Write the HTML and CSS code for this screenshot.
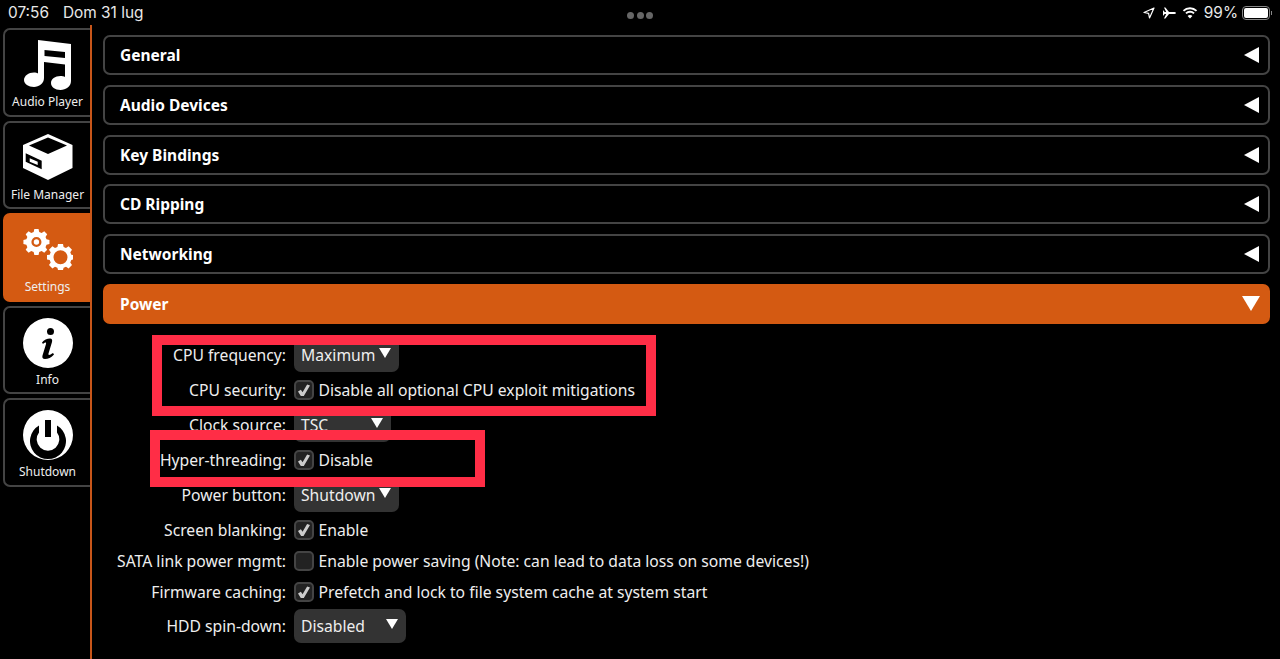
FILE: index.html
```html
<!DOCTYPE html>
<html lang="it">
<head>
<meta charset="utf-8">
<title>Settings</title>
<link rel="stylesheet" href="styles.css">
</head>
<body>
<header class="status">
  <div class="status-left"><span>07:56</span><span>Dom 31 lug</span></div>
  <div class="status-dots"><i></i><i></i><i></i></div>
  <div class="status-right">
    <svg class="st-loc" viewBox="0 0 12 12"><path d="M11 1 1 5.500l4.600.9.9 4.600z" fill="none" stroke="#fff" stroke-width="1.200" stroke-linejoin="round"/></svg>
    <svg class="st-plane" viewBox="0 0 14 14"><path d="M1 1.500h1.400L6 6h4.600c1.200 0 2.400.4 2.400 1s-1.200 1-2.400 1H6l-3.600 4.500H1L3.200 8H1.600L.6 9.500H0V4.500h.6L1.600 6h1.600z" fill="#fff"/></svg>
    <svg class="st-wifi" viewBox="0 0 16 12"><path d="M8 2.200c2.300 0 4.400.9 5.900 2.400l1.300-1.400A10.300 10.300 0 0 0 8 .2 10.300 10.300 0 0 0 .8 3.200l1.300 1.400A8.400 8.400 0 0 1 8 2.200zm0 3.500c1.300 0 2.500.5 3.400 1.400l1.300-1.400A6.700 6.700 0 0 0 8 3.800a6.700 6.700 0 0 0-4.700 1.900l1.300 1.400A4.900 4.900 0 0 1 8 5.700zM8 11.500l2.400-2.500A3.400 3.400 0 0 0 8 8a3.400 3.400 0 0 0-2.400 1z" fill="#fff"/></svg>
    <span class="st-pct">99%</span>
    <span class="battery"><b></b></span><span class="battery-tip"></span>
  </div>
</header>
<div class="app">
  <nav class="side">
    <a class="tab">
      <svg class="icon-music" viewBox="0 0 47 50"><path fill-rule="evenodd" d="M14 0 47 4V41C47 46.500 42 50 36.500 50 31 50 27 47 27 43 27 39 31 36 36.500 36 38 36 40 36.300 41 37V24.500L20 22V38C20 43.500 15 47 10 47 4.500 47 0 44 0 40 0 36 4.500 32.500 10 32.500 11.500 32.500 13 32.800 14 33.500ZM20.500 10V16L41 18V12Z"/></svg>
      <span>Audio Player</span>
    </a>
    <a class="tab tab-box">
      <svg class="tab-icon" viewBox="0 0 50 46"><path fill-rule="evenodd" d="M25 0 49.500 11V34L25 46 0 34V11ZM25 3.500 6 11.500 25 20 44 11.500ZM2.700 19.300V27.700L18.700 35.300V26.700ZM6.700 24.300 14.700 27.700V31L6.700 27.700Z"/></svg>
      <span>File Manager</span>
    </a>
    <a class="tab tab-on">
      <svg class="tab-icon" viewBox="0 0 50 41"><g fill="#fff" fill-rule="evenodd"><g transform="scale(.84)"><path d="M13.500 0H18.500L19.300 3.600 22.200 4.800 25.300 2.800 28.800 6.300 26.800 9.400 28 12.300 31.500 13V18L28 18.800 26.800 21.700 28.800 24.800 25.300 28.300 22.200 26.300 19.300 27.500 18.500 31H13.500L12.700 27.500 9.800 26.300 6.700 28.300 3.200 24.800 5.200 21.700 4 18.800 .5 18V13L4 12.300 5.200 9.400 3.200 6.300 6.700 2.800 9.800 4.800 12.700 3.600ZM16 9.500A6 6 0 1 0 16 21.500 6 6 0 1 0 16 9.500Z"/><circle cx="16" cy="15.500" r="3.200"/></g><path d="M35 15H40L40.600 18 43 19 45.600 17.300 49 20.700 47.300 23.300 48.300 25.700 50 26V30.500L48.300 31 47.300 33.400 49 36 45.600 39.400 43 37.700 40.600 38.700 40 41H35L34.400 38.700 32 37.700 29.400 39.400 26 36 27.700 33.400 26.700 31 24 30.500V26L26.700 25.700 27.700 23.300 26 20.700 29.400 17.300 32 19 34.400 18ZM37.500 21.300A7 7 0 1 0 37.500 35.300 7 7 0 1 0 37.500 21.300Z"/></g></svg>
      <span>Settings</span>
    </a>
    <a class="tab">
      <svg class="tab-icon" viewBox="0 0 50 50"><path fill-rule="evenodd" d="M25 0A25 25 0 1 0 25 50 25 25 0 1 0 25 0ZM27.500 10A3.500 3.500 0 1 1 27.500 17 3.500 3.500 0 1 1 27.500 10ZM19 24.500C21 22 24 20.500 27 20.500 29 20.500 29.500 22 29 24L25.500 35.500C25 37.500 26.500 37.500 30 35L31 36.500C28.500 39.500 25 41 22 41 19.500 41 19 39.500 19.500 37.500L23 26C23.500 24 22 24 20 26Z"/></svg>
      <span>Info</span>
    </a>
    <a class="tab">
      <svg class="tab-icon" viewBox="0 0 50 50"><path fill-rule="evenodd" d="M25 0A25 25 0 1 0 25 50 25 25 0 1 0 25 0ZM22 10H28V27H22ZM16 15.500V22.500A11.300 11.300 0 1 0 34 22.500V15.500A18 18 0 1 1 16 15.500Z"/></svg>
      <span>Shutdown</span>
    </a>
  </nav>
  <main class="main">
    <div class="panel"><span>General</span><i class="tri-left"></i></div>
    <div class="panel"><span>Audio Devices</span><i class="tri-left"></i></div>
    <div class="panel"><span>Key Bindings</span><i class="tri-left"></i></div>
    <div class="panel"><span>CD Ripping</span><i class="tri-left"></i></div>
    <div class="panel"><span>Networking</span><i class="tri-left"></i></div>
    <div class="panel panel-on"><span>Power</span><i class="tri-down"></i></div>
    <div class="form">
      <div class="row"><label>CPU frequency:</label><div class="select sel-md"><span>Maximum</span><i></i></div></div>
      <div class="row"><label>CPU security:</label><div class="check on"></div><span>Disable all optional CPU exploit mitigations</span></div>
      <div class="row"><label>Clock source:</label><div class="select sel-sm"><span>TSC</span><i></i></div></div>
      <div class="row"><label>Hyper-threading:</label><div class="check on"></div><span>Disable</span></div>
      <div class="row"><label>Power button:</label><div class="select sel-md"><span>Shutdown</span><i></i></div></div>
      <div class="row row-mid"><label>Screen blanking:</label><div class="check on"></div><span>Enable</span></div>
      <div class="row row-tight"><label>SATA link power mgmt:</label><div class="check"></div><span>Enable power saving (Note: can lead to data loss on some devices!)</span></div>
      <div class="row row-tight"><label>Firmware caching:</label><div class="check on"></div><span>Prefetch and lock to file system cache at system start</span></div>
      <div class="row row-tall"><label>HDD spin-down:</label><div class="select sel-lg"><span>Disabled</span><i></i></div></div>
    </div>
  </main>
</div>
<div class="mark mark-a"></div>
<div class="mark mark-b"></div>
</body>
</html>
```
FILE: styles.css
```css
* { box-sizing: border-box; }
html, body { margin: 0; height: 100%; }
body {
  background: #000;
  color: #fff;
  font-family: "Noto Sans", "Open Sans", sans-serif;
  font-size: 15.7px;
  overflow: hidden;
  position: relative;
}
.status {
  height: 25px;
  display: flex;
  align-items: center;
  justify-content: space-between;
  padding: 0 8px 0 8px;
  position: relative;
  font-family: Inter, "Liberation Sans", sans-serif;
  font-size: 15.4px;
  color: #e8e8e8;
}
.status-left { display: flex; gap: 14px; }
.status-dots { position: absolute; left: 627px; top: 12px; display: flex; gap: 2.5px; }
.status-dots i { width: 7px; height: 7px; border-radius: 50%; background: #666; }
.status-right { display: flex; align-items: center; }
.st-loc { width: 12px; height: 12px; margin-right: 8px; }
.st-plane { width: 14px; height: 14px; margin-right: 5px; }
.st-wifi { width: 16px; height: 12px; margin-right: 6px; }
.st-pct { margin-right: 4px; }
.battery { width: 28px; height: 14px; border: 1px solid #888; border-radius: 4px; padding: 1px; display: block; }
.battery b { display: block; height: 100%; background: #fff; border-radius: 2px; }
.battery-tip { width: 1px; height: 4px; background: #888; margin-left: 1px; }
.app { display: flex; height: 634px; }
.side {
  width: 92px;
  flex: none;
  border-right: 2px solid #c8561a;
  padding: 3px 0 0 3px;
  display: flex;
  flex-direction: column;
  gap: 4px;
}
.tab {
  height: 89px;
  flex: none;
  border: 2px solid #444;
  border-right: 0;
  border-radius: 7px 0 0 7px;
  display: flex;
  flex-direction: column;
  align-items: center;
  font-size: 12px;
  color: #eee;
  padding-top: 10px;
  position: relative;
}
.tab:nth-child(even) { height: 88px; }
.tab span { position: absolute; bottom: 5px; left: 0; right: 0; text-align: center; }
.tab:nth-child(even) span { bottom: 4px; }
.tab-box { padding-top: 11px; }
.tab-on { background: #d45a12; border-color: #d45a12; padding-top: 14px; }
.tab-icon { width: 50px; fill: #fff; display: block; }
.icon-music { width: 47px; fill: #fff; display: block; }
.main { flex: 1; padding: 10px 10px 0 11px; display: flex; flex-direction: column; min-width: 0; }
.panel {
  height: 40px;
  flex: none;
  border: 2px solid #444;
  border-radius: 7px;
  margin-bottom: 9.8px;
  display: flex;
  align-items: center;
  justify-content: space-between;
  padding: 0 9px 0 15px;
  font-weight: 700;
  font-size: 15.5px;
}
.panel-on { background: #d45a12; border-color: #d45a12; margin-bottom: 14px; }
.tri-left { width: 0; height: 0; border-style: solid; border-width: 8px 15px 8px 0; border-color: transparent #fff transparent transparent; }
.tri-down { width: 0; height: 0; border-style: solid; border-width: 15px 9px 0 9px; border-color: #fff transparent transparent transparent; margin-right: -1px; }
.form { display: flex; flex-direction: column; }
.row { height: 35px; flex: none; display: flex; align-items: center; white-space: nowrap; color: #eee; }
.row-mid { height: 33px; padding-top: 1px; }
.row-tight { height: 31px; }
.row-tall { height: 37px; }
.row label { width: 183px; margin-right: 8px; text-align: right; flex: none; }
.select {
  height: 34px;
  background: #333;
  border-radius: 7px;
  display: flex;
  align-items: center;
  justify-content: space-between;
  padding: 0 8px 0 7px;
}
.select i { width: 0; height: 0; border-style: solid; border-width: 10px 6px 0 6px; border-color: #fff transparent transparent transparent; margin-top: -5px; }
.sel-sm { width: 97px; }
.sel-md { width: 105px; }
.sel-lg { width: 112px; }
.check {
  width: 20px;
  height: 20px;
  background: #222;
  border: 2px solid #444;
  border-radius: 5px;
  margin-right: 4.5px;
  flex: none;
  position: relative;
}
.check.on::after {
  content: "";
  position: absolute;
  left: 2px;
  top: 2px;
  width: 12px;
  height: 12px;
  background: #ccc;
  clip-path: polygon(0 58%, 24% 44%, 38% 64%, 76% 0, 100% 8%, 46% 100%, 26% 100%);
}
.mark { position: absolute; border: 10px solid #ff2d46; }
.mark-a { left: 152px; top: 335px; width: 504px; height: 81px; }
.mark-b { left: 150px; top: 430px; width: 335px; height: 57px; }
```
